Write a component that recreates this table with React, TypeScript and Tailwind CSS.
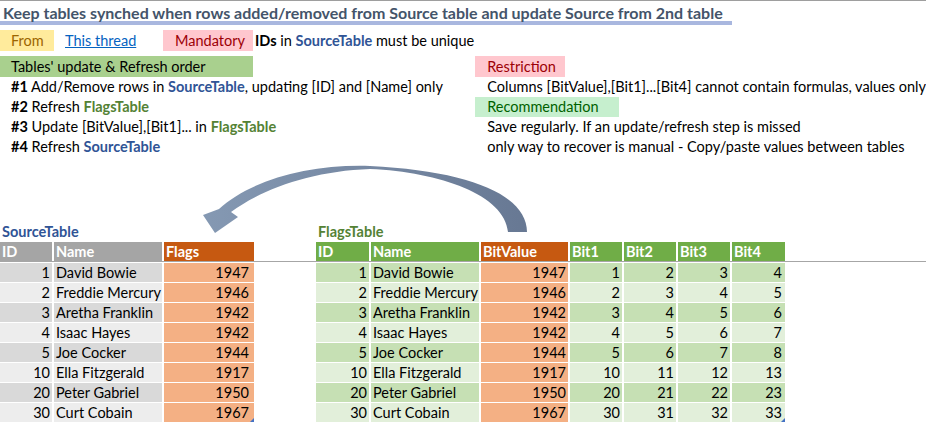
import React from 'react';

type Row = { id: number; name: string; year: number };

const rows: Row[] = [
  { id: 1, name: 'David Bowie', year: 1947 },
  { id: 2, name: 'Freddie Mercury', year: 1946 },
  { id: 3, name: 'Aretha Franklin', year: 1942 },
  { id: 4, name: 'Isaac Hayes', year: 1942 },
  { id: 5, name: 'Joe Cocker', year: 1944 },
  { id: 10, name: 'Ella Fitzgerald', year: 1917 },
  { id: 20, name: 'Peter Gabriel', year: 1950 },
  { id: 30, name: 'Curt Cobain', year: 1967 },
];

const Src = ({ children }: { children: React.ReactNode }) => (
  <span className="font-bold text-[#305496]">{children}</span>
);
const Flg = ({ children }: { children: React.ReactNode }) => (
  <span className="font-bold text-[#548235]">{children}</span>
);

// little table resize handle in the last cell
const Handle = () => (
  <span className="absolute right-0 bottom-0 w-0 h-0 border-l-[4px] border-l-transparent border-b-[4px] border-b-[#4472C4]" />
);

const CurvedArrow = () => (
  <svg className="absolute left-0 top-0 pointer-events-none" width="926" height="423" viewBox="0 0 926 423">
    <defs>
      <linearGradient id="arrowFill" x1="200" y1="0" x2="530" y2="0" gradientUnits="userSpaceOnUse">
        <stop offset="0" stopColor="#8599B3" />
        <stop offset="1" stopColor="#677893" />
      </linearGradient>
    </defs>
    <path
      d="M527,232 C527,195 470,171 370,166 C310,164 250,180 219,209 L203,215 L215,233 L238,217 L231,212 C262,189 312,171 370,169 C440,172 505,195 508,232 Z"
      fill="url(#arrowFill)"
    />
  </svg>
);

export default function App() {
  return (
    <div className="relative w-[926px] h-[423px] overflow-hidden bg-white text-black font-['Lato',sans-serif] text-[14.5px]">
      <div className="h-px bg-[#9e9e9e]" />

      {/* title */}
      <div className="w-[732px] h-[24px] border-b-[4px] border-[#A9B7DF] pl-[3px] leading-[23px] font-bold text-[16px] text-[#44546A] whitespace-nowrap">
        Keep tables synched when rows added/removed from Source table and update Source from 2nd table
      </div>
      <div className="h-[5px]" />

      {/* from / mandatory */}
      <div className="flex h-[21px] leading-[21px] whitespace-nowrap">
        <div className="w-[54px] bg-[#FFEB9C] text-[#9C6500] pl-[11px]">From</div>
        <div className="w-[109px] pl-[11px]">
          <span className="text-[#0563C1] underline">This thread</span>
        </div>
        <div className="w-[90px] bg-[#FFC7CE] text-[#9C0006] pl-[12px]">Mandatory</div>
        <div className="pl-[2px]">
          <span className="font-bold">IDs</span> in <Src>SourceTable</Src> must be unique
        </div>
      </div>
      <div className="h-[5px]" />

      {/* order + notes */}
      <div className="flex whitespace-nowrap">
        <div className="w-[480px]">
          <div className="w-[253px] h-[21px] leading-[21px] bg-[#A9D08E] pl-[11px]">Tables' update &amp; Refresh order</div>
          <div className="h-[20px] leading-[20px] pl-[11px]">
            <span className="font-bold">#1</span> Add/Remove rows in <Src>SourceTable</Src>, updating [ID] and [Name] only
          </div>
          <div className="h-[20px] leading-[20px] pl-[11px]">
            <span className="font-bold">#2</span> Refresh <Flg>FlagsTable</Flg>
          </div>
          <div className="h-[20px] leading-[20px] pl-[11px]">
            <span className="font-bold">#3</span> Update [BitValue],[Bit1]... in <Flg>FlagsTable</Flg>
          </div>
          <div className="h-[20px] leading-[20px] pl-[11px]">
            <span className="font-bold">#4</span> Refresh <Src>SourceTable</Src>
          </div>
        </div>
        <div className="flex-1">
          <div className="w-[90px] h-[21px] leading-[21px] bg-[#FFC7CE] text-[#9C0006] pl-[12px]">Restriction</div>
          <div className="h-[20px] leading-[20px] pl-[12px]">Columns [BitValue],[Bit1]...[Bit4] cannot contain formulas, values only</div>
          <div className="w-[144px] h-[20px] leading-[20px] bg-[#C6EFCE] text-[#006100] pl-[12px]">Recommendation</div>
          <div className="h-[20px] leading-[20px] pl-[12px]">Save regularly. If an update/refresh step is missed</div>
          <div className="h-[20px] leading-[20px] pl-[12px]">only way to recover is manual - Copy/paste values between tables</div>
        </div>
      </div>

      <div className="h-[64px]" />

      {/* table captions */}
      <div className="flex h-[21px] leading-[22px] font-bold whitespace-nowrap">
        <div className="w-[316px] pl-[2px] text-[#305496]">SourceTable</div>
        <div className="pl-[2px] text-[#548235]">FlagsTable</div>
      </div>

      {/* headers */}
      <div className="flex h-[19px] leading-[20px] font-bold text-white whitespace-nowrap">
        <div className="w-[54px] border-r-2 border-white bg-[#A5A5A5] pl-[2px]">ID</div>
        <div className="w-[110px] border-r-2 border-white bg-[#A5A5A5] pl-[2px]">Name</div>
        <div className="w-[90px] bg-[#C65911] pl-[2px]">Flags</div>
        <div className="w-[62px]" />
        <div className="w-[55px] border-r-2 border-white bg-[#70AD47] pl-[2px]">ID</div>
        <div className="w-[110px] border-r-2 border-white bg-[#70AD47] pl-[2px]">Name</div>
        <div className="w-[89px] border-r-2 border-white bg-[#C65911] pl-[2px]">BitValue</div>
        <div className="w-[54px] border-r-2 border-white bg-[#70AD47] pl-[2px]">Bit1</div>
        <div className="w-[54px] border-r-2 border-white bg-[#70AD47] pl-[2px]">Bit2</div>
        <div className="w-[54px] border-r-2 border-white bg-[#70AD47] pl-[2px]">Bit3</div>
        <div className="w-[53px] bg-[#70AD47] pl-[2px]">Bit4</div>
      </div>
      <div className="h-px bg-[#A6A6A6]" />
      <div className="h-px" />

      {/* body */}
      {rows.map((r, i) => {
        const odd = i % 2 === 0;
        const grey = odd ? 'bg-[#D9D9D9]' : 'bg-[#EDEDED]';
        const green = odd ? 'bg-[#C6E0B4]' : 'bg-[#E2EFDA]';
        const last = i === rows.length - 1;
        return (
          <div key={r.id} className="flex h-[20px] leading-[20px] whitespace-nowrap">
            <div className={`w-[54px] border-r-2 border-b border-white ${grey} pr-[2px] text-right`}>{r.id}</div>
            <div className={`w-[110px] border-r-2 border-b border-white ${grey} pl-[2px]`}>{r.name}</div>
            <div className="relative w-[90px] border-b border-white bg-[#F4B084] pr-[5px] text-right">
              {r.year}
              {last && <Handle />}
            </div>
            <div className="w-[62px]" />
            <div className={`w-[55px] border-r-2 border-b border-white ${green} pr-[2px] text-right`}>{r.id}</div>
            <div className={`w-[110px] border-r-2 border-b border-white ${green} pl-[2px]`}>{r.name}</div>
            <div className="w-[89px] border-r-2 border-b border-white bg-[#F4B084] pr-[2px] text-right">{r.year}</div>
            <div className={`w-[54px] border-r-2 border-b border-white ${green} pr-[2px] text-right`}>{r.id}</div>
            <div className={`w-[54px] border-r-2 border-b border-white ${green} pr-[2px] text-right`}>{r.id + 1}</div>
            <div className={`w-[54px] border-r-2 border-b border-white ${green} pr-[2px] text-right`}>{r.id + 2}</div>
            <div className={`relative w-[53px] border-b border-white ${green} pr-[3px] text-right`}>
              {r.id + 3}
              {last && <Handle />}
            </div>
          </div>
        );
      })}

      <CurvedArrow />
    </div>
  );
}
